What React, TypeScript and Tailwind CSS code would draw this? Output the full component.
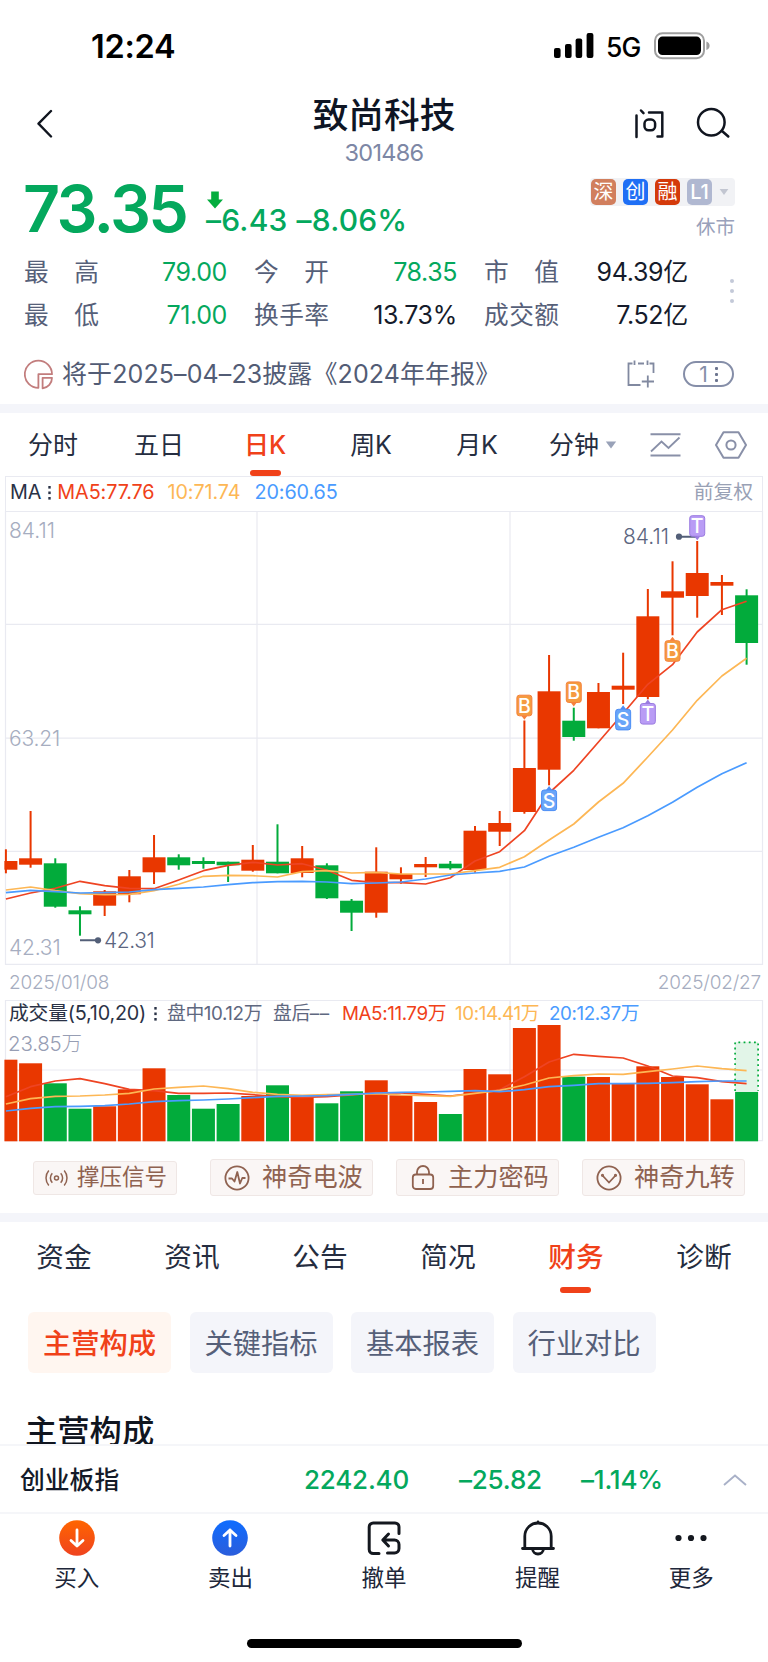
import type { ReactNode } from "react";

const UP = "#e93700";
const DOWN = "#02ab3b";
const MA_RED = "#ee4423";
const MA_YELLOW = "#fdb755";
const MA_BLUE = "#4a9bff";

const STEP = 24.69;
const FIRST = 5.9;
const centerOf = (i: number) => FIRST + STEP * i;

// [rising, high, body top, body bottom, low, volume top]
type Candle = [boolean, number, number, number, number, number];

const candles: Candle[] = [
  [true, 849.3, 861, 869.7, 873.3, 1059.7],
  [true, 811, 858.3, 864.7, 867.7, 1063.3],
  [false, 858.3, 863.3, 906.7, 907.7, 1083.3],
  [false, 906.3, 910.3, 914.3, 935.7, 1108.7],
  [true, 890, 891.3, 905.7, 916, 1106.3],
  [true, 870, 876.3, 894.3, 902.3, 1089.3],
  [true, 835, 857.3, 872.3, 884, 1068.3],
  [false, 854.3, 857.3, 865.3, 869.7, 1095],
  [false, 857.3, 861, 864, 868.7, 1108.7],
  [false, 861.7, 861.7, 865.3, 882, 1104],
  [true, 845, 859.7, 870.7, 871.7, 1096],
  [false, 824.3, 861.7, 873.3, 873.3, 1085.3],
  [true, 846, 858.3, 873, 877.3, 1097.3],
  [false, 863.3, 865.3, 898.3, 899, 1103.3],
  [false, 899, 900.7, 912.7, 931, 1091.3],
  [true, 847.3, 871.7, 912.7, 917.7, 1080.3],
  [true, 867.3, 874, 879.3, 883.7, 1095.3],
  [true, 857, 864, 867.3, 877, 1102],
  [false, 861, 863.7, 868.3, 869.7, 1114],
  [true, 826, 830.7, 870, 872.7, 1069],
  [true, 811, 823, 831.7, 846, 1074.3],
  [true, 720.5, 768, 812, 813.7, 1028],
  [true, 655, 691.3, 769.7, 785.3, 1025],
  [false, 707.7, 720.7, 737, 740.7, 1076.7],
  [true, 683, 692, 728.3, 728.3, 1077],
  [true, 652.7, 685.7, 689.7, 704, 1083.7],
  [true, 589, 616.3, 697, 699.3, 1066.3],
  [true, 561.3, 591.3, 597.7, 635.3, 1077],
  [true, 541, 573, 596, 617.7, 1084.3],
  [true, 575, 582, 585.7, 615, 1099.3],
  [false, 589.3, 595.3, 643, 664.7, 1092],
];

const priceMa5 = [
  899, 893, 888.3, 881.3, 885.7, 888.3, 888.7, 880, 870.7, 865.3, 862.3, 865, 863.7, 870.3, 880.3, 882.6,
  882.7, 884, 877.7, 861, 851.7, 830.7, 793, 770.3, 742, 713.5, 684.3, 664.7, 632, 609.7, 601.3,
];
const priceMa10 = [
  890, 887, 890.7, 893.7, 894.7, 894.3, 890.7, 884.3, 876.3, 875.3, 875.7, 877, 871.7, 870.7, 873, 872.3,
  874, 874, 874, 870.7, 867.3, 856.7, 840, 824, 802, 783.3, 757, 730, 700.3, 676, 658.3,
];
const priceMa20 = [
  892.7, 890.3, 891.7, 893, 892.7, 892, 889.7, 888.3, 887, 884.7, 882.7, 881.7, 881.3, 882, 883.7, 883,
  882, 879, 875, 873, 871.3, 867, 856.3, 847.3, 837.3, 827.7, 815.7, 802.3, 787.3, 773.7, 762.7,
];
const volumeMa5 = [
  1096.7, 1086.7, 1081, 1078.7, 1083.7, 1089.3, 1090.7, 1093.3, 1093.3, 1093, 1094.7, 1096.7, 1097.3, 1096.7,
  1095, 1092.7, 1093, 1094.3, 1096, 1093, 1089.7, 1076.7, 1062, 1054.3, 1056.3, 1058, 1066, 1076, 1077.7,
  1081.7, 1083.7,
];
const volumeMa10 = [
  1104, 1098.7, 1096.3, 1096, 1095, 1093.3, 1089, 1087.3, 1086, 1088.7, 1092.3, 1094.3, 1095.3, 1094.7, 1094.3,
  1093.7, 1095, 1095.7, 1096.3, 1093.3, 1090.3, 1085, 1078, 1075.7, 1074, 1074.3, 1071.7, 1069, 1066, 1068.7,
  1070.7,
];
const volumeMa20 = [
  1111, 1108.3, 1106.7, 1106.3, 1105.7, 1104, 1101.7, 1100.7, 1100, 1099, 1097.7, 1096.3, 1096, 1095.7, 1094.3,
  1093, 1092.3, 1092, 1091.3, 1090.7, 1091.7, 1089.7, 1086.7, 1085.3, 1083.7, 1083.7, 1083.3, 1082.7, 1081.7,
  1081, 1081,
];

const Line = ({ values, color }: { values: number[]; color: string }) => (
  <polyline
    points={values.map((y, i) => `${centerOf(i).toFixed(1)},${y}`).join(" ")}
    fill="none"
    stroke={color}
    strokeWidth="1.7"
    strokeLinejoin="round"
  />
);

const markColors = {
  B: ["#f59b40", "#f5813c"],
  S: ["#69a5f8", "#4b8df5"],
  T: ["#b99cf5", "#9a7be0"],
};

// letter, candle index, box top, pointer side
const marks: ["B" | "S" | "T", number, number, "up" | "down"][] = [
  ["B", 21, 694.7, "down"],
  ["S", 22, 789.5, "up"],
  ["B", 23, 681.4, "down"],
  ["S", 25, 708.8, "up"],
  ["T", 26, 703, "up"],
  ["B", 27, 640.2, "up"],
  ["T", 28, 515.2, "down"],
];

const Marks = () => (
  <>
    {marks.map(([letter, index, top, side]) => {
      const x = centerOf(index);
      const [fill, stroke] = markColors[letter];
      const tip =
        side === "up"
          ? `M${x - 3} ${top + 0.5}L${x} ${top - 3.5}L${x + 3} ${top + 0.5}Z`
          : `M${x - 3} ${top + 21}L${x} ${top + 25}L${x + 3} ${top + 21}Z`;
      return (
        <g key={index}>
          <path d={tip} fill={stroke} />
          <rect x={x - 7.5} y={top + 0.5} width="15" height="20.6" rx="2.5" fill={fill} stroke={stroke} />
          <text x={x} y={top + 18} textAnchor="middle" fontSize="19.5" fontWeight="500" fill="#fff">
            {letter}
          </text>
        </g>
      );
    })}
  </>
);

const PriceChart = () => (
  <svg width="768" height="454" viewBox="0 511 768 454" className="block">
    <g stroke="#e9eaf1" strokeWidth="1.2" fill="none">
      <path d="M5.5 511.5H762.5V964.3H5.5Z" />
      <path d="M5.5 624.4H762.5M5.5 738.2H762.5M5.5 851.4H762.5M257 511.5V964M510 511.5V964" />
    </g>
    <g fontSize="21" fontWeight="300" fill="#a6adc0">
      <text x="9" y="537.5">84.11</text>
      <text x="9" y="746" letterSpacing="-0.2">63.21</text>
      <text x="9" y="955.3" letterSpacing="-0.2">42.31</text>
    </g>
    {candles.map(([rising, high, top, bottom, low], i) => {
      const x = centerOf(i);
      const left = Math.max(x - 11.5, 4.4);
      return (
        <g key={i} fill={rising ? UP : DOWN}>
          <rect x={x - 1} y={high} width="2" height={low - high} />
          <rect x={left} y={top} width={x + 11.5 - left} height={bottom - top} />
        </g>
      );
    })}
    <Line values={priceMa5} color={MA_RED} />
    <Line values={priceMa10} color={MA_YELLOW} />
    <Line values={priceMa20} color={MA_BLUE} />
    <g stroke="#535f78" strokeWidth="2">
      <path d="M80 940.3H98M679 536.7H697" />
    </g>
    <g fill="#535f78">
      <circle cx="98" cy="940.3" r="3.1" />
      <circle cx="679" cy="536.7" r="3.1" />
    </g>
    <g fontSize="21" fontWeight="300" fill="#5b6580">
      <text x="104" y="948.3" letterSpacing="-0.4">42.31</text>
      <text x="623" y="544.3">84.11</text>
    </g>
    <Marks />
  </svg>
);

const VolumeChart = () => {
  const last = centerOf(candles.length - 1);
  return (
    <svg width="768" height="142" viewBox="0 1000 768 142" className="block">
      <path
        d="M5.5 1000.5H762.5V1140.6H5.5ZM5.5 1070H762.5M257 1000.5V1141M510 1000.5V1141"
        stroke="#e9eaf1"
        strokeWidth="1.2"
        fill="none"
      />
      {candles.map(([rising, , , , , top], i) => {
        const x = centerOf(i);
        const left = Math.max(x - 11.5, 4.4);
        return (
          <rect key={i} x={left} y={top} width={x + 11.5 - left} height={1141.3 - top} fill={rising ? UP : DOWN} />
        );
      })}
      <rect x={last - 11.5} y="1042" width="23" height="50" fill="#e2f5e8" />
      <path
        d={`M${last - 11.5} 1091V1042.3H${last + 11.5}V1091`}
        fill="none"
        stroke={DOWN}
        strokeWidth="1.7"
        strokeDasharray="1.8 3.4"
      />
      <Line values={volumeMa5} color={MA_RED} />
      <Line values={volumeMa10} color={MA_YELLOW} />
      <Line values={volumeMa20} color={MA_BLUE} />
    </svg>
  );
};

const Dots = () => (
  <svg width="3" height="14" viewBox="0 0 3 14" fill="#2a3246">
    <rect x="0.3" width="2.4" height="2.6" />
    <rect x="0.3" y="5.5" width="2.4" height="2.6" />
    <rect x="0.3" y="11" width="2.4" height="2.6" />
  </svg>
);

const Caret = ({ className }: { className: string }) => (
  <svg width="12" height="8" viewBox="0 0 12 8" className={className} fill="currentColor">
    <path d="M0.8 0.5H11.2L6 7.5Z" />
  </svg>
);

const StatusBar = () => (
  <div className="flex h-[92px] items-center justify-between pl-[91px] pr-[58px]">
    <span className="pt-[2px] text-[32.5px] font-semibold leading-none tracking-[-0.3px] text-black">12:24</span>
    <div className="flex items-center">
      <svg width="40" height="26" viewBox="0 0 40 26" fill="#000">
        <rect x="0" y="15" width="6.6" height="10" rx="2" />
        <rect x="11" y="11" width="6.6" height="14" rx="2" />
        <rect x="21.6" y="5.5" width="6.6" height="19.5" rx="2" />
        <rect x="32.6" y="0" width="6.8" height="25" rx="2" />
      </svg>
      <span className="ml-[12px] w-[36px] pt-[2px] text-[26.5px] font-medium leading-none tracking-[-0.8px] text-black">5G</span>
      <svg width="56" height="28" viewBox="0 0 56 28" className="ml-[12px]">
        <rect x="1" y="1.2" width="49" height="25" rx="7.5" fill="#fff" stroke="#9f9f9f" strokeWidth="2" />
        <rect x="4" y="4.6" width="43" height="18.4" rx="4.5" fill="#000" />
        <path d="M52.4 9.5C54.7 10.5 55.6 12 55.6 13.7C55.6 15.4 54.7 17 52.4 18Z" fill="#9f9f9f" />
      </svg>
    </div>
  </div>
);

const Header = () => (
  <div className="flex h-[78px] justify-between pl-[37px] pr-[37px]">
    <svg width="120" height="64" viewBox="0 0 120 64" fill="none" stroke="#10151f" strokeWidth="2.4">
      <path d="M14 19L1.5 31.7L14 44.5" strokeLinecap="round" strokeLinejoin="round" />
    </svg>
    <div className="flex flex-col items-center">
      <h1 className="mt-[2px] text-[35.7px] font-medium leading-[42px] text-[#0e1524]">致尚科技</h1>
      <span className="mt-[4px] text-[23.5px] leading-[26px] tracking-[-0.7px] text-[#7d87a5]">301486</span>
    </div>
    <div className="flex w-[120px] justify-end gap-[31px] pt-[15px]">
      <svg width="32" height="34" viewBox="0 0 32 34" fill="none" stroke="#10151f" strokeWidth="2.5" strokeLinecap="round">
        <path d="M3.5 8.5V30M8 3.5L10.5 6.2M16 5.5H29.3V29.6H24.5" strokeLinejoin="round" />
        <rect x="11.5" y="12.6" width="10.6" height="10.6" rx="4" />
      </svg>
      <svg width="35" height="34" viewBox="0 0 35 34" fill="none" stroke="#10151f" strokeWidth="2.5" strokeLinecap="round">
        <circle cx="15.3" cy="15.3" r="13.3" />
        <path d="M26 24L32.3 29.5" />
      </svg>
    </div>
  </div>
);

const tags = [
  { label: "深", className: "bg-[#d17f5e]" },
  { label: "创", className: "bg-[#1f6ff5]" },
  { label: "融", className: "bg-[#d43a0b]" },
  { label: "L1", className: "bg-[#b0b8d1] font-medium" },
];

const Price = () => (
  <div className="flex h-[80px] justify-between pl-[23px] pr-[33px]">
    <div className="flex">
      <span className="w-[164px] text-[64.5px] font-semibold leading-[78px] tracking-[-2.6px] text-[#04a85d]">73.35</span>
      <div className="ml-[19px] flex flex-col">
        <svg width="18" height="18" viewBox="0 0 18 18" className="mt-[21px]">
          <path d="M5.2 0.5H12.8V8.5H17L9 17.5L1 8.5H5.2Z" fill="#04ad3e" />
        </svg>
        <div className="-mt-[6px] flex gap-[9px] text-[30px] font-medium leading-[34px] tracking-[0.2px] text-[#04a85d]">
          <span>–6.43</span>
          <span>–8.06%</span>
        </div>
      </div>
    </div>
    <div className="flex flex-col items-end pt-[8px]">
      <div className="flex h-[28px] w-[145px] items-center gap-[7px] rounded-[4px] bg-[#f1f2f5] pl-px">
        {tags.map((tag) => (
          <span
            key={tag.label}
            className={`flex h-[26px] w-[25px] items-center justify-center rounded-[5px] text-[20px] leading-none text-white ${tag.className}`}
          >
            {tag.label}
          </span>
        ))}
        <Caret className="w-[10px] text-[#c2c6d1]" />
      </div>
      <span className="mt-[9px] text-[19.5px] leading-[24px] text-[#99a1bb]">休市</span>
    </div>
  </div>
);

const stats = [
  { label: "最高", value: "79.00", down: true },
  { label: "今开", value: "78.35", down: true },
  { label: "市值", value: "94.39亿", down: false },
  { label: "最低", value: "71.00", down: true },
  { label: "换手率", value: "13.73%", down: false },
  { label: "成交额", value: "7.52亿", down: false },
];

const Stats = () => (
  <div className="flex h-[86px] items-center justify-between pl-[24px] pr-[34px] pt-[2px]">
    <div className="grid grid-cols-[203px_203px_204px] gap-x-[27px]">
      {stats.map((stat) => (
        <div key={stat.label} className="flex h-[43px] items-center justify-between text-[25px] leading-none">
          <span className="flex w-[75px] justify-between text-[24.7px] text-[#566079]">
            {stat.label.split("").map((char) => (
              <span key={char}>{char}</span>
            ))}
          </span>
          <span className={stat.down ? "tracking-[-0.4px] text-[#04a85d]" : "tracking-[-0.3px] text-[#151b2b]"}>
            {stat.value}
          </span>
        </div>
      ))}
    </div>
    <div className="flex flex-col gap-[6px] pb-[6px]">
      <i className="size-[4px] rounded-full bg-[#c3c9d8]" />
      <i className="size-[4px] rounded-full bg-[#c3c9d8]" />
      <i className="size-[4px] rounded-full bg-[#c3c9d8]" />
    </div>
  </div>
);

const Notice = () => (
  <div className="flex h-[68px] items-center pl-[24px] pr-[34px] pt-[8px]">
    <svg width="30" height="31" viewBox="0 0 30 31" fill="none" stroke="#c27d7d" strokeWidth="1.8">
      <path d="M14.4 28.8A13.6 13.6 0 1 1 28 15.2H14.4Z" strokeLinejoin="round" />
      <path d="M18.6 18.8H28A10.5 10.5 0 0 1 18.6 29.3Z" strokeLinejoin="round" />
    </svg>
    <span className="ml-[8px] flex-1 whitespace-nowrap text-[25px] leading-none tracking-[0.1px] text-[#525c75]">
      将于2025–04–23披露《2024年年报》
    </span>
    <svg width="28" height="28" viewBox="0 0 28 28" fill="none" stroke="#8189a0" strokeWidth="1.8">
      <path d="M5.5 3.5H1.5V25H13.5M22.5 3.5H26.5V13M7.5 0.5V5M20.5 0.5V5M11 3.5H17M20.8 15.5V27.5M14.8 21.5H27" />
    </svg>
    <div className="ml-[28px] flex h-[26px] w-[51px] items-center justify-center gap-[7px] rounded-full border-2 border-[#858ea8] text-[21px] leading-none text-[#858ea8]">
      1
      <svg width="3" height="15" viewBox="0 0 3 15" fill="#6c758f">
        <rect width="3" height="3" rx="1" />
        <rect y="6" width="3" height="3" rx="1" />
        <rect y="12" width="3" height="3" rx="1" />
      </svg>
    </div>
  </div>
);

const periods = ["分时", "五日", "日K", "周K", "月K"];

const PeriodTabs = () => (
  <div className="flex h-[63px] text-[25px] leading-[64px] tracking-[-0.1px] text-[#252d40]">
    {periods.map((period) =>
      period === "日K" ? (
        <div key={period} className="relative w-[106px] text-center font-medium text-[#f04119]">
          {period}
          <i className="absolute bottom-0 left-[38px] h-[6px] w-[31px] rounded-[3px] bg-[#f04119]" />
        </div>
      ) : (
        <div key={period} className="w-[106px] text-center">
          {period}
        </div>
      )
    )}
    <div className="flex w-[106px] items-center justify-center gap-[6px]">
      分钟
      <Caret className="text-[#99a2b8]" />
    </div>
    <div className="flex w-[58px] items-center justify-center">
      <svg width="31" height="26" viewBox="0 0 31 26" fill="none" stroke="#8990a8" strokeWidth="2">
        <path d="M0.5 2.2H30.5M0.5 23.4H30.5" />
        <path d="M1 19.5L11.5 9.5L18.5 16L29.5 5.5" strokeWidth="1.8" />
      </svg>
    </div>
    <div className="flex w-[74px] items-center justify-center">
      <svg width="32" height="28" viewBox="0 0 32 28" fill="none" stroke="#8990a8" strokeWidth="2">
        <path d="M8.5 1.2H23.5L31 14L23.5 26.8H8.5L1 14Z" strokeLinejoin="round" />
        <circle cx="16" cy="14" r="4.6" />
      </svg>
    </div>
  </div>
);

const MaLegend = () => (
  <div className="mx-[5px] flex h-[35px] items-center border-x border-t border-[#e9eaf1] pb-[3px] pl-[4px] pr-[9px] text-[19.8px] leading-none tracking-[-0.1px]">
    <span className="mr-[7px] text-[#2a3246]">MA</span>
    <Dots />
    <span className="ml-[6px] text-[#f04119]">MA5:77.76</span>
    <span className="ml-[13px] text-[#fdb755]">10:71.74</span>
    <span className="ml-[14px] text-[#4a9bff]">20:60.65</span>
    <span className="ml-auto tracking-normal text-[#99a1b5]">前复权</span>
  </div>
);

const VolumePanel = () => (
  <div className="relative h-[142px]">
    <VolumeChart />
    <div className="absolute left-[9px] top-[2px] flex h-[24px] items-center whitespace-nowrap text-[18.8px] leading-none tracking-[-0.4px]">
      <span className="mr-[8px] w-[137px] text-[19.8px] tracking-[-0.2px] text-[#2a3246]">成交量(5,10,20)</span>
      <Dots />
      <span className="ml-[10px] w-[93px] text-[#5f6880]">盘中10.12万</span>
      <span className="ml-[13px] w-[57px] text-[#5f6880]">
        盘后<span className="tracking-[0.6px]">––</span>
      </span>
      <span className="ml-[12px] w-[101px] text-[#f04119]">MA5:11.79万</span>
      <span className="ml-[12px] w-[81px] text-[#fdb755]">10:14.41万</span>
      <span className="ml-[13px] text-[#4a9bff]">20:12.37万</span>
    </div>
    <span className="absolute left-[8px] top-[32px] text-[20.5px] font-light leading-[24px] tracking-[-0.2px] text-[#979eb4]">
      23.85万
    </span>
  </div>
);

const signalIcons: Record<string, ReactNode> = {
  神奇电波: (
    <>
      <circle cx="13" cy="13" r="11.6" />
      <path d="M4.5 13.5H8L10.5 16.5L13.3 7L16 18.5L18.3 13H21.5" strokeLinejoin="round" />
    </>
  ),
  主力密码: (
    <>
      <rect x="2.8" y="9.5" width="20.4" height="14.5" rx="3" />
      <path d="M7 9.5V7A6 6 0 0 1 19 7V9.5M13 14V19" />
    </>
  ),
  神奇九转: (
    <>
      <circle cx="13" cy="13" r="11.6" />
      <path d="M6.5 10.5L13 17.5L19.5 10.5" />
      <circle cx="6.5" cy="10.3" r="0.7" />
      <circle cx="19.5" cy="10.3" r="0.7" />
    </>
  ),
};

const Signals = () => (
  <div className="flex h-[71px] items-center pl-[33px] text-[#8f6250]">
    <div className="mr-[33px] flex h-[34px] w-[144px] items-center rounded-[3px] border border-[#efe7e5] bg-[#faf6f5] pl-[11px] text-[22.5px] leading-none">
      <svg width="23" height="18" viewBox="0 0 23 18" fill="none" stroke="currentColor" strokeWidth="1.5" className="mr-[9px]">
        <circle cx="11.5" cy="9" r="2" />
        <path d="M7.3 4.2A7 7 0 0 0 7.3 13.8M15.7 4.2A7 7 0 0 1 15.7 13.8M3.8 1.5A11.5 11.5 0 0 0 3.8 16.5M19.2 1.5A11.5 11.5 0 0 1 19.2 16.5" />
      </svg>
      撑压信号
    </div>
    <div className="flex gap-[23px]">
      {Object.keys(signalIcons).map((name) => (
        <div
          key={name}
          className="flex h-[37px] w-[163px] items-center rounded-[3px] border border-[#efe7e5] bg-[#faf6f5] pl-[13px] text-[25.2px] leading-none"
        >
          <svg width="26" height="26" viewBox="0 0 26 26" fill="none" stroke="currentColor" strokeWidth="1.8" className="mr-[12px]">
            {signalIcons[name]}
          </svg>
          {name}
        </div>
      ))}
    </div>
  </div>
);

const sections = ["资金", "资讯", "公告", "简况", "财务", "诊断"];

const SectionTabs = () => (
  <div className="grid h-[70px] grid-cols-6 text-center text-[27.7px] leading-[71px] text-[#252d40]">
    {sections.map((section) =>
      section === "财务" ? (
        <div key={section} className="relative font-medium text-[#f04119]">
          {section}
          <i className="absolute bottom-0 left-[48px] h-[6px] w-[31px] rounded-[3px] bg-[#f04119]" />
        </div>
      ) : (
        <div key={section}>{section}</div>
      )
    )}
  </div>
);

const chips = ["主营构成", "关键指标", "基本报表", "行业对比"];

const Chips = () => (
  <div className="mt-[20px] flex gap-[18.5px] pl-[28px]">
    {chips.map((chip, i) => (
      <div
        key={chip}
        className={`flex h-[61px] w-[143px] items-center justify-center rounded-[6px] pt-[3px] text-[28.3px] leading-none ${
          i === 0 ? "bg-[#fff6f0] font-medium text-[#f04119]" : "bg-[#f4f5fa] text-[#566079]"
        }`}
      >
        {chip}
      </div>
    ))}
  </div>
);

const IndexBar = () => (
  <div className="flex h-[70px] items-center border-y-2 border-[#f5f6f9] pl-[20px] pt-px text-[26px] font-medium leading-none tracking-[-0.2px] text-[#04a85d]">
    <span className="w-[284px] pt-px text-[24.8px] tracking-normal text-[#141a28]">创业板指</span>
    <span className="w-[155px]">2242.40</span>
    <span className="w-[122px]">–25.82</span>
    <span className="w-[142px]">–1.14%</span>
    <svg width="24" height="12" viewBox="0 0 24 12" fill="none" stroke="#a9b1c8" strokeWidth="1.9">
      <path d="M1 11L12 1.5L23 11" />
    </svg>
  </div>
);

const actions = [
  {
    label: "买入",
    icon: (
      <>
        <circle cx="18" cy="18" r="17.8" fill="url(#buy)" />
        <path d="M18 10V26M12 20.5L18 26L24 20.5" stroke="#fff" strokeWidth="2.8" />
      </>
    ),
  },
  {
    label: "卖出",
    icon: (
      <>
        <circle cx="18" cy="18" r="17.8" fill="url(#sell)" />
        <path d="M18 26V10M12 15.5L18 10L24 15.5" stroke="#fff" strokeWidth="2.8" />
      </>
    ),
  },
  {
    label: "撤单",
    icon: (
      <g stroke="#14181f" strokeWidth="3">
        <path d="M13 33.5H7.2A4 4 0 0 1 3.2 29.5V7A4 4 0 0 1 7.2 3H29A4 4 0 0 1 33 7V13.5" />
        <path d="M22.5 14L16.8 20L22.5 26M17.5 20H28.5A4.5 4.5 0 0 1 33 24.5V28.5A4.5 4.5 0 0 1 28.5 33H21.5" />
      </g>
    ),
  },
  {
    label: "提醒",
    icon: (
      <g stroke="#14181f" strokeWidth="2.8">
        <path d="M4.8 28V16.2A13.2 13.2 0 0 1 31.2 16.2V28M2.5 28.5H33.5M18 1.8V3" />
        <path d="M12.6 29A5.4 5 0 0 0 23.4 29" />
      </g>
    ),
  },
  {
    label: "更多",
    icon: (
      <g fill="#14181f">
        <circle cx="5.5" cy="18" r="3.1" />
        <circle cx="18" cy="18" r="3.1" />
        <circle cx="30.5" cy="18" r="3.1" />
      </g>
    ),
  },
];

const ActionBar = () => (
  <div className="grid grid-cols-5 pt-[6px]">
    {actions.map((action) => (
      <div key={action.label} className="flex flex-col items-center">
        <svg width="36" height="36" viewBox="0 0 36 36" fill="none" strokeLinecap="round" strokeLinejoin="round">
          <defs>
            <linearGradient id="buy" x1="0" y1="0" x2="0" y2="1">
              <stop offset="0" stopColor="#ff6500" />
              <stop offset="1" stopColor="#ef431f" />
            </linearGradient>
            <linearGradient id="sell" x1="0" y1="0" x2="0" y2="1">
              <stop offset="0" stopColor="#0f6dff" />
              <stop offset="1" stopColor="#2b5ddb" />
            </linearGradient>
          </defs>
          {action.icon}
        </svg>
        <span className="mt-[8px] text-[22.5px] leading-[28px] text-[#20273a]">{action.label}</span>
      </div>
    ))}
  </div>
);

const App = () => {
  return (
    <div className="flex h-[1662px] w-[768px] flex-col overflow-hidden bg-white font-[Inter,'Noto_Sans_CJK_SC',sans-serif]">
      <StatusBar />
      <Header />
      <Price />
      <Stats />
      <Notice />
      <div className="h-[9px] shrink-0 bg-[#f4f5fa]" />
      <PeriodTabs />
      <MaLegend />
      <PriceChart />
      <div className="flex h-[35px] items-center justify-between pl-[9px] pr-[7px] text-[19px] font-light leading-none tracking-[-0.2px] text-[#a6adc0]">
        <span>2025/01/08</span>
        <span>2025/02/27</span>
      </div>
      <VolumePanel />
      <Signals />
      <div className="h-[9px] shrink-0 bg-[#f4f5fa]" />
      <SectionTabs />
      <Chips />
      <div className="h-[71px] overflow-hidden pl-[25px] pt-[36px]">
        <h2 className="text-[32.3px] font-medium leading-[46px] text-[#10151f]">主营构成</h2>
      </div>
      <IndexBar />
      <ActionBar />
      <div className="mx-auto mb-[14px] mt-auto h-[9px] w-[275px] rounded-full bg-black" />
    </div>
  );
};

export default App;
